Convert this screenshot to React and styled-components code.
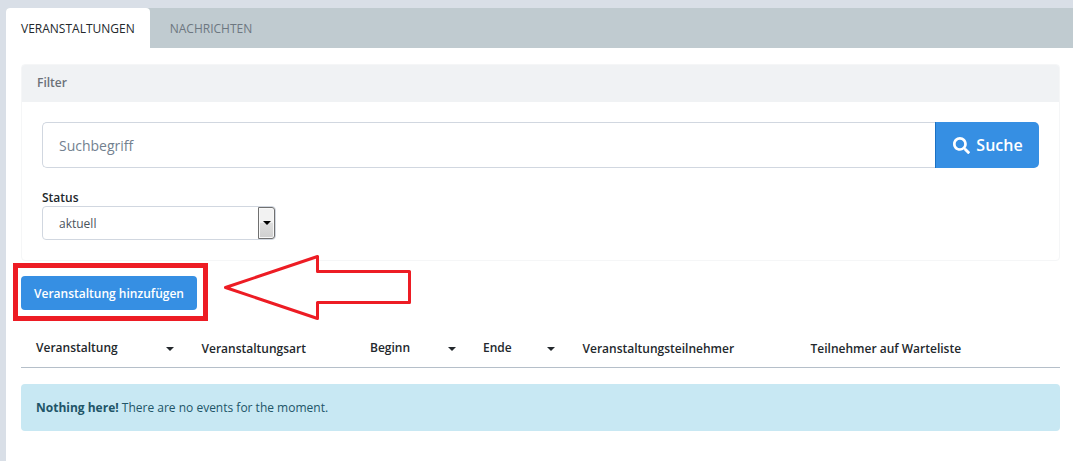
import React, { useState } from 'react';
import styled, { createGlobalStyle } from 'styled-components';
import { FaSearch } from 'react-icons/fa';

const columns = [
  { label: 'Veranstaltung', width: 165, sortable: true },
  { label: 'Veranstaltungsart', width: 169 },
  { label: 'Beginn', width: 113, sortable: true },
  { label: 'Ende', width: 99, sortable: true },
  { label: 'Veranstaltungsteilnehmer', width: 228 },
  { label: 'Teilnehmer auf Warteliste', width: 265 },
];

const App = () => {
  const [tab, setTab] = useState('Veranstaltungen');
  const [query, setQuery] = useState('');

  return (
    <Page>
      <GlobalStyle />
      <Tabs>
        {['Veranstaltungen', 'Nachrichten'].map((name) => (
          <Tab key={name} $active={tab === name} onClick={() => setTab(name)}>
            {name}
          </Tab>
        ))}
      </Tabs>
      <Content>
        <Card>
          <CardHeader>Filter</CardHeader>
          <CardBody>
            <SearchGroup>
              <SearchInput
                placeholder="Suchbegriff"
                value={query}
                onChange={(e) => setQuery(e.target.value)}
              />
              <SearchButton>
                <FaSearch size={17} />
                Suche
              </SearchButton>
            </SearchGroup>
            <Label>Status</Label>
            <Select>
              <SelectValue>aktuell</SelectValue>
              <SelectArrow>
                <Caret $color="#000" />
              </SelectArrow>
            </Select>
          </CardBody>
        </Card>
        <Actions>
          <AddButton>Veranstaltung hinzufügen</AddButton>
          <Highlight />
          <Arrow width="190" height="68" viewBox="0 0 190 68">
            <path
              d="M4.5 34.5 L96.5 3.5 V18.5 H188.5 V49.5 H96.5 V65.5 Z"
              fill="none"
              stroke="#ed1c24"
              strokeWidth="3"
              strokeLinejoin="round"
            />
          </Arrow>
        </Actions>
        <TableHead>
          {columns.map((col) => (
            <HeadCell key={col.label} $width={col.width} $sortable={col.sortable}>
              {col.label}
              {col.sortable && <SortCaret $color="#23282c" />}
            </HeadCell>
          ))}
        </TableHead>
        <Alert>
          <strong>Nothing here!</strong> There are no events for the moment.
        </Alert>
      </Content>
    </Page>
  );
};

const GlobalStyle = createGlobalStyle`
  * {
    box-sizing: border-box;
  }

  body {
    margin: 0;
    background: #d9dfe7;
    font-family: 'Open Sans', sans-serif;
    font-size: 12px;
    color: #23282c;
    overflow: hidden;
  }

  button, input {
    font-family: inherit;
  }
`;

const Page = styled.div`
  padding: 8px 0 0 6px;
`;

const Tabs = styled.div`
  display: flex;
  height: 40px;
  background: #c0cbd0;
  border-top-left-radius: 4px;
`;

const Tab = styled.button`
  padding: ${({ $active }) => ($active ? '0 15px' : '0 20px')};
  border: 0;
  border-radius: 4px 4px 0 0;
  background: ${({ $active }) => ($active ? '#fff' : 'transparent')};
  color: ${({ $active }) => ($active ? '#23282c' : '#6d7780')};
  font-size: 12px;
  text-transform: uppercase;
  cursor: pointer;
`;

const Content = styled.div`
  height: 413px;
  padding: 16px 13px 0 15px;
  background: #fff;
`;

const Card = styled.div`
  height: 197px;
  border: 1px solid #f5f6f7;
  border-radius: 4px;
  overflow: hidden;
`;

const CardHeader = styled.div`
  height: 37px;
  padding: 0 15px;
  background: #f0f2f4;
  color: #6b7178;
  font-weight: 600;
  line-height: 35px;
`;

const CardBody = styled.div`
  padding: 20px;
`;

const SearchGroup = styled.div`
  display: flex;
  height: 46px;
  margin-bottom: 22px;
`;

const SearchInput = styled.input`
  flex: 1;
  min-width: 0;
  padding: 0 16px;
  border: 1px solid #d1d7e0;
  border-right: 0;
  border-radius: 5px 0 0 5px;
  background: #fff;
  color: #5c6873;
  font-size: 14px;
  outline: none;

  &::placeholder {
    color: #73818f;
    opacity: 1;
  }
`;

const SearchButton = styled.button`
  display: flex;
  align-items: center;
  justify-content: center;
  gap: 6px;
  width: 104px;
  padding: 0 0 0 1px;
  border: 0;
  border-left: 1px solid #1b71c4;
  border-radius: 0 5px 5px 0;
  background: #368fe3;
  color: #fff;
  font-size: 16px;
  font-weight: 600;
  cursor: pointer;
`;

const Label = styled.div`
  height: 16px;
  line-height: 16px;
  font-weight: 600;
`;

const Select = styled.div`
  display: flex;
  width: 234px;
  height: 34px;
  border: 1px solid #d1d7e0;
  border-radius: 4px;
`;

const SelectValue = styled.span`
  flex: 1;
  padding-left: 16px;
  color: #4b545c;
  line-height: 33px;
`;

const SelectArrow = styled.span`
  display: flex;
  align-items: center;
  justify-content: center;
  width: 17px;
  border: 1px solid #707070;
  border-radius: 0 3px 3px 0;
  background: linear-gradient(#f2f2f2 0 48%, #dedede 50%, #cfcfcf);
  box-shadow: inset 0 0 0 1px #f8f8f8;
`;

const Caret = styled.span`
  width: 0;
  height: 0;
  border: 4px solid transparent;
  border-top-color: ${({ $color }) => $color};
  border-bottom: 0;
`;

const SortCaret = styled(Caret)`
  margin-top: 4px;
`;

const Actions = styled.div`
  position: relative;
  padding-top: 15px;
`;

const AddButton = styled.button`
  display: block;
  width: 176px;
  height: 34px;
  padding: 0;
  border: 0;
  border-radius: 4px;
  background: #368fe3;
  color: #fff;
  font-size: 12px;
  font-weight: 600;
  cursor: pointer;
`;

/* Marks the add button */
const Highlight = styled.div`
  position: absolute;
  top: 2px;
  left: -8px;
  width: 195px;
  height: 58px;
  border: 5px solid #ed1c24;
`;

const Arrow = styled.svg`
  position: absolute;
  top: -8px;
  left: 200px;
`;

const TableHead = styled.div`
  display: flex;
  height: 48px;
  margin-top: 10px;
  padding-top: 10px;
  border-bottom: 1px solid #b5bfc9;
`;

const HeadCell = styled.div`
  display: flex;
  align-items: center;
  justify-content: space-between;
  width: ${({ $width }) => $width}px;
  height: 36px;
  padding: ${({ $sortable }) => ($sortable ? '0 12px 2px 15px' : '0 15px 0 15.5px')};
  font-weight: 600;
  white-space: nowrap;
`;

const Alert = styled.div`
  height: 47px;
  margin-top: 16px;
  padding: 0 15px;
  border-radius: 4px;
  background: #c8e8f3;
  color: #215568;
  line-height: 47px;
`;

export default App;
